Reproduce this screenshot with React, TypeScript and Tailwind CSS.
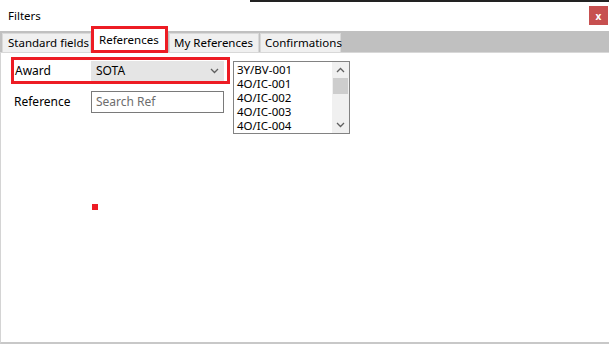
import React from "react";

const font = { fontFamily: '"Noto Sans", "Open Sans", sans-serif' };

function Chevron({ up = false, className = "" }: { up?: boolean; className?: string }) {
  return (
    <svg width="9" height="6" viewBox="0 0 9 6" className={className}>
      <path
        d={up ? "M1 5 L4.5 1.5 L8 5" : "M1 1 L4.5 4.5 L8 1"}
        fill="none"
        stroke="#606060"
        strokeWidth="1.3"
      />
    </svg>
  );
}

export default function App() {
  const items = ["3Y/BV-001", "4O/IC-001", "4O/IC-002", "4O/IC-003", "4O/IC-004"];
  return (
    <div className="w-[609px] h-[346px] bg-white relative overflow-hidden text-[11.5px] text-black" style={font}>
      <div className="absolute left-[250px] right-0 top-0 h-[2px] bg-[#222]" />
      {/* Title bar */}
      <div className="h-[31px] flex items-center justify-between pl-[8px] pr-[1px]">
        <span className="leading-none">Filters</span>
        <div className="w-[19px] h-[19px] bg-[#c75050] flex items-center justify-center text-white font-bold text-[10px] leading-none">
          x
        </div>
      </div>
      {/* Tab strip */}
      <div className="h-[22px] bg-[#c0c0c0] border-b border-[#d8d8d8] flex items-end pl-[2px] relative">
        <div className="h-[19px] w-[89px] bg-[#f0f0f0] border border-b-0 border-[#d9d9d9] flex items-center pl-[5px] whitespace-nowrap">
          Standard fields
        </div>
        <div className="h-[27px] w-[77px] -mb-[1px] border-[3px] border-[#ed1c24] bg-white flex items-center pl-[5px] whitespace-nowrap">
          References
        </div>
        <div className="h-[19px] w-[90px] ml-[1px] bg-[#f0f0f0] border border-b-0 border-[#d9d9d9] flex items-center pl-[4px] whitespace-nowrap">
          My References
        </div>
        <div className="h-[19px] w-[81px] ml-[1px] bg-[#f0f0f0] border border-b-0 border-[#d9d9d9] flex items-center pl-[4px] whitespace-nowrap">
          Confirmations
        </div>
      </div>
      {/* Body */}
      <div className="h-[291px] border-l border-[#d4d4d4] border-b-2 border-b-[#c8c8c8] flex pl-[10px] pt-[4px]">
        <div className="w-[219px] flex flex-col">
          <div className="h-[27px] border-[3px] border-[#ed1c24] flex items-center">
            <span className="w-[77px] pl-[1px] text-[12px]">Award</span>
            <div className="w-[133px] h-[20px] bg-[#e5e5e5] flex items-center justify-between pl-[5px] pr-[5px] text-[12px]">
              <span>SOTA</span>
              <Chevron />
            </div>
          </div>
          <div className="h-[22px] mt-[7px] flex items-center text-[12px]">
            <span className="w-[80px] pl-[3px]">Reference</span>
            <div className="w-[133px] h-[22px] border border-[#7a7a7a] flex items-center pl-[4px] text-[#6d6d6d]">
              Search Ref
            </div>
          </div>
        </div>
        <div className="ml-[3px] mt-[4px] w-[117px] h-[73px] border border-[#828282] flex">
          <div className="flex-1 flex flex-col pl-[3px] pt-[1px] text-[11.5px]">
            {items.map((t) => (
              <span key={t} className="h-[14px] leading-[14px] block">{t}</span>
            ))}
          </div>
          <div className="w-[17px] bg-[#f0f0f0] flex flex-col items-center">
            <div className="h-[16px] flex items-center justify-center">
              <Chevron up />
            </div>
            <div className="w-[15px] h-[16px] bg-[#cdcdcd]" />
            <div className="flex-1" />
            <div className="h-[16px] flex items-center justify-center">
              <Chevron />
            </div>
          </div>
        </div>
      </div>
      <div className="absolute left-[92px] top-[204px] w-[6px] h-[6px] bg-[#ed1c24]" />
    </div>
  );
}
